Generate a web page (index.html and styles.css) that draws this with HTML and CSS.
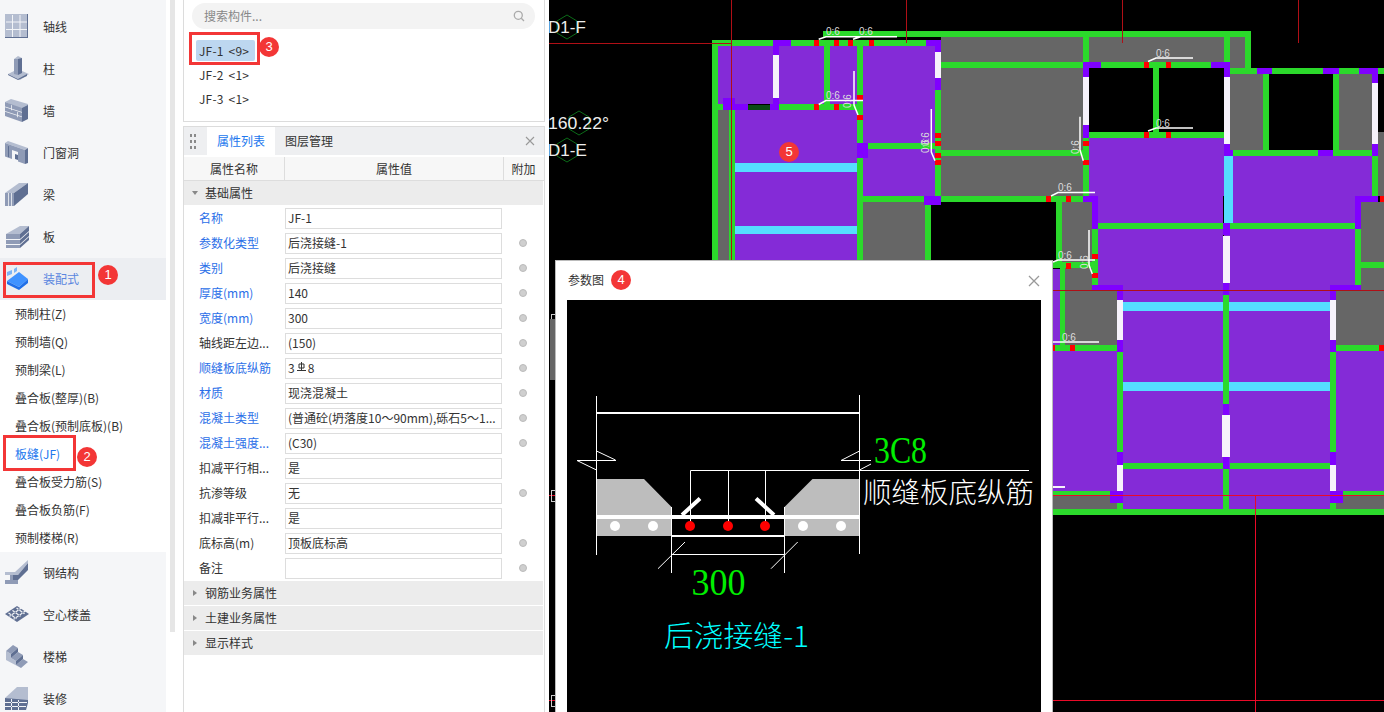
FILE: index.html
```html
<!DOCTYPE html>
<html lang="zh-CN">
<head>
<meta charset="utf-8">
<title>参数图</title>
<link rel="stylesheet" href="styles.css">
</head>
<body>
<div class="app">

<aside class="sidebar">
  <div class="nav">
    <div class="nav-row"><svg class="nav-icon" viewBox="0 0 24 24"><rect class="l" x="0" y="0" width="23" height="24"/><path class="d" d="M22 0h1v24H0v-1h22z"/><path class="w" d="M7 1h1v22H7zM14.500 1h1v22h-1zM1 7.500h21v1H1zM1 15h21v1H1z"/></svg><span>轴线</span></div>
    <div class="nav-row"><svg class="nav-icon" viewBox="0 0 24 24"><path class="l" d="M3 18l6-3v-12l4-3 4 2v13l7 3-9 6z"/><path class="d" d="M13 3l4-1v15l-4 2z"/><path class="m" d="M9 3l4 0v16l-4-1z"/><path class="d" d="M3 18l10 5 9-5 0 2-9 4-10-5z"/></svg><span>柱</span></div>
    <div class="nav-row"><svg class="nav-icon" viewBox="0 0 24 24"><path class="l" d="M0 4l6-3 17 5v4l-6 1z"/><path class="m" d="M0 4l17 6v14L0 18z"/><path class="d" d="M17 10l6-3v14l-6 3z"/><path class="w" d="M0 8.500l17 5.500v.8L0 9.300zM0 13l17 5.500v.8L0 13.800zM6 7l.8.300v5h-.8zM12 14l.8.300v5h-.8z"/></svg><span>墙</span></div>
    <div class="nav-row"><svg class="nav-icon" viewBox="0 0 24 24"><path class="l" d="M0 3l3-2 20 7-3 2z"/><path class="m" d="M0 3l20 7v14l-7-2.500V12L7 10v9l-7-2.500z"/><path class="d" d="M20 10l3-2v15l-3 1zM3 6l1 .300v11l-1-.300z"/><path class="d" d="M10 14l3 1v5l-3-1z"/></svg><span>门窗洞</span></div>
    <div class="nav-row"><svg class="nav-icon" viewBox="0 0 24 24"><path class="l" d="M0 11L14 1h9L9 11z"/><path class="d" d="M9 11L23 1v11L9 24z"/><path class="m" d="M0 11h9v13H0z"/><path class="w" d="M3 11h.8v13H3zM6 11h.8v13H6z"/></svg><span>梁</span></div>
    <div class="nav-row"><svg class="nav-icon" viewBox="0 0 24 24"><path class="l" d="M1 10L15 2h9l-9 8z"/><path class="m" d="M1 10h14v14H1z"/><path class="d" d="M15 10l9-8v14l-9 8z"/><path class="w" d="M1 15h14v1H1zM1 20h14v1H1zM15 15l9-8v1l-9 8zM15 20l9-8v1l-9 8z"/></svg><span>板</span></div>
    <div class="nav-row nav-row-active"><svg class="nav-icon" viewBox="0 0 24 24"><path class="bl" d="M2 6l5-2v4L2 10zM9 3l3-2v4L9 7z"/><path class="bb" d="M2 15l12-9 9 7-9 8z"/><path class="bd" d="M2 15l12 6v3L2 18zM14 21l9-8v4l-9 7z"/></svg><span>装配式</span></div>
  </div>
  <ul class="sub">
    <li>预制柱(Z)</li>
    <li>预制墙(Q)</li>
    <li>预制梁(L)</li>
    <li>叠合板(整厚)(B)</li>
    <li>叠合板(预制底板)(B)</li>
    <li class="sub-on">板缝(JF)</li>
    <li>叠合板受力筋(S)</li>
    <li>叠合板负筋(F)</li>
    <li>预制楼梯(R)</li>
  </ul>
  <div class="nav">
    <div class="nav-row"><svg class="nav-icon" viewBox="0 0 24 24"><path class="l" d="M0 12H10L23 0V3L13 15H0z"/><path class="d" d="M8 15H13L23 3V10L13 20H8z"/><path class="m" d="M5 15h3v5H5z"/><path class="m" d="M0 20h13v4H0z"/></svg><span>钢结构</span></div>
    <div class="nav-row"><svg class="nav-icon" viewBox="0 0 24 24"><path class="d" d="M0 12L12 4l12 8-12 8z"/><path class="w" d="M4 10.500l8 6-1 .7-8-6zM8 8l8 6-1 .7-8-6zM12 5.500l8 6-1 .7-8-6zM16 5.500L4 14l1 .7 12-8.500zM20 8.500L8 17l1 .7 12-8.500z"/></svg><span>空心楼盖</span></div>
    <div class="nav-row"><svg class="nav-icon" viewBox="0 0 24 24"><path class="l" d="M1 7L6 10V14L11 17V21L16 24L1 16z"/><path class="m" d="M1 7L8 1L13 4L6 10zM6 14L13 8L18 11L11 17zM11 21L18 15L23 18L16 24z"/><path class="d" d="M6 10L13 4V8L6 14zM11 17L18 11V15L11 21z"/></svg><span>楼梯</span></div>
    <div class="nav-row"><svg class="nav-icon" viewBox="0 0 24 24"><path class="l" d="M0 12L12 1h11v13H10z"/><path class="d" d="M0 12l23 2v3l-2 7H0z"/><path class="w" d="M0 16h22v1H0zM0 20h21v1H0zM6 13v11h1V13zM13 14v10h1V14z"/></svg><span>装修</span></div>
  </div>
</aside>

<div class="scrollbar"><div class="scroll-thumb"></div></div>

<main class="panels">
  <section class="list-panel">
    <div class="search">
      <span>搜索构件...</span>
      <svg class="search-icon" viewBox="0 0 12 12"><circle cx="5.300" cy="5.300" r="4"/><path d="M8.300 8.300L11 11"/></svg>
    </div>
    <ul class="items">
      <li class="item item-on">JF-1 &lt;9&gt;</li>
      <li class="item">JF-2 &lt;1&gt;</li>
      <li class="item">JF-3 &lt;1&gt;</li>
    </ul>
  </section>

  <section class="prop-panel">
    <div class="tabs">
      <div class="grip"><i></i><i></i><i></i><i></i><i></i><i></i></div>
      <div class="tab tab-on">属性列表</div>
      <div class="tab">图层管理</div>
      <svg class="tab-close" viewBox="0 0 10 10"><path d="M1 1l8 8M9 1l-8 8"/></svg>
    </div>
    <div class="thead">
      <div>属性名称</div><div>属性值</div><div>附加</div>
    </div>
    <div class="group"><i class="tri tri-down"></i>基础属性</div>
    <div class="rows">
      <div class="row"><label class="key">名称</label><div class="val">JF-1</div></div>
      <div class="row"><label class="key">参数化类型</label><div class="val">后浇接缝-1</div><b class="dot"></b></div>
      <div class="row"><label class="key">类别</label><div class="val">后浇接缝</div><b class="dot"></b></div>
      <div class="row"><label class="key">厚度(mm)</label><div class="val">140</div><b class="dot"></b></div>
      <div class="row"><label class="key">宽度(mm)</label><div class="val">300</div><b class="dot"></b></div>
      <div class="row"><label>轴线距左边...</label><div class="val">(150)</div><b class="dot"></b></div>
      <div class="row"><label class="key">顺缝板底纵筋</label><div class="val">3<svg class="rebar" viewBox="0 0 11 11"><path d="M3 2h5v4H3zM5.500 0v8M1 8.500h9"/></svg>8</div><b class="dot"></b></div>
      <div class="row"><label class="key">材质</label><div class="val">现浇混凝土</div><b class="dot"></b></div>
      <div class="row"><label class="key">混凝土类型</label><div class="val">(普通砼(坍落度10～90mm),砾石5～1...</div><b class="dot"></b></div>
      <div class="row"><label class="key">混凝土强度...</label><div class="val">(C30)</div><b class="dot"></b></div>
      <div class="row"><label>扣减平行相...</label><div class="val">是</div></div>
      <div class="row"><label>抗渗等级</label><div class="val">无</div><b class="dot"></b></div>
      <div class="row"><label>扣减非平行...</label><div class="val">是</div></div>
      <div class="row"><label>底标高(m)</label><div class="val">顶板底标高</div><b class="dot"></b></div>
      <div class="row"><label>备注</label><div class="val"></div><b class="dot"></b></div>
    </div>
    <div class="group"><i class="tri"></i>钢筋业务属性</div>
    <div class="group"><i class="tri"></i>土建业务属性</div>
    <div class="group"><i class="tri"></i>显示样式</div>
  </section>
</main>

<section class="canvas">
  <svg class="plan" viewBox="549 0 835 712" shape-rendering="crispEdges">
    <g class="gray">
      <rect x="718" y="110" width="12" height="152"/><rect x="863" y="202" width="62" height="60"/>
      <rect x="941" y="37" width="142" height="25"/><rect x="941" y="68" width="142" height="82"/><rect x="941" y="156" width="142" height="40"/>
      <rect x="1089" y="37" width="135" height="25"/><rect x="1230" y="37" width="15" height="31"/>
      <rect x="1230" y="74" width="33" height="76"/><rect x="1339" y="74" width="33" height="76"/><rect x="1378" y="132" width="6" height="64"/>
      <rect x="1062" y="202" width="30" height="60"/><rect x="1065" y="268" width="27" height="23"/><rect x="1065" y="291" width="52" height="54"/>
      <rect x="1336" y="291" width="48" height="54"/><rect x="1361" y="202" width="23" height="60"/><rect x="1361" y="268" width="23" height="23"/>
      <rect x="1053" y="496" width="64" height="13"/><rect x="1336" y="496" width="48" height="13"/>
      <rect x="550" y="319" width="5" height="61"/>
    </g>
    <g class="purple">
      <rect x="718" y="46" width="55" height="58"/><rect x="779" y="46" width="45" height="58"/><rect x="830" y="46" width="27" height="58"/><rect x="863" y="46" width="72" height="150"/>
      <rect x="735" y="110" width="122" height="152"/>
      <rect x="1089" y="138" width="135" height="58"/><rect x="1098" y="196" width="125" height="89"/><rect x="1230" y="156" width="142" height="40"/><rect x="1230" y="196" width="125" height="89"/><rect x="1224" y="223" width="9" height="62"/>
      <rect x="1053" y="269" width="7" height="76"/><rect x="1123" y="285" width="207" height="224"/><rect x="1053" y="351" width="64" height="140"/><rect x="1336" y="351" width="48" height="140"/>
    </g>
    <g class="cyan">
      <rect x="735" y="163" width="122" height="9"/><rect x="735" y="226" width="122" height="8"/><rect x="1224" y="156" width="9" height="67"/>
      <rect x="1123" y="302" width="207" height="9"/><rect x="1123" y="382" width="207" height="9"/>
    </g>
    <g class="green">
      <rect x="823" y="31" width="428" height="6"/><rect x="712" y="40" width="61" height="6"/><rect x="791" y="40" width="135" height="6"/>
      <rect x="941" y="62" width="142" height="6"/><rect x="1101" y="62" width="110" height="6"/>
      <rect x="718" y="104" width="5" height="6"/><rect x="779" y="104" width="78" height="6"/><rect x="868" y="143" width="67" height="6"/>
      <rect x="941" y="150" width="142" height="6"/><rect x="1089" y="132" width="138" height="6"/><rect x="863" y="196" width="62" height="6"/><rect x="941" y="196" width="142" height="6"/>
      <rect x="1230" y="68" width="154" height="6"/><rect x="1233" y="150" width="139" height="6"/><rect x="1098" y="223" width="125" height="6"/><rect x="1230" y="223" width="125" height="6"/>
      <rect x="1053" y="262" width="39" height="6"/><rect x="1361" y="262" width="23" height="6"/><rect x="1053" y="345" width="64" height="6"/><rect x="1336" y="345" width="48" height="6"/>
      <rect x="1120" y="463" width="103" height="6"/><rect x="1230" y="463" width="103" height="6"/><rect x="1053" y="491" width="57" height="5"/><rect x="1343" y="491" width="41" height="5"/><rect x="1053" y="509" width="331" height="6"/>
      <rect x="712" y="40" width="6" height="222"/><rect x="824" y="46" width="6" height="58"/><rect x="857" y="46" width="6" height="97"/><rect x="857" y="158" width="6" height="104"/><rect x="935" y="90" width="6" height="106"/>
      <rect x="925" y="205" width="6" height="57"/><rect x="729" y="110" width="6" height="152"/>
      <rect x="1083" y="37" width="6" height="25"/><rect x="1224" y="37" width="6" height="25"/><rect x="1245" y="31" width="6" height="37"/><rect x="1153" y="68" width="6" height="64"/><rect x="1083" y="138" width="6" height="58"/>
      <rect x="1263" y="74" width="6" height="76"/><rect x="1333" y="74" width="6" height="76"/><rect x="1372" y="156" width="6" height="40"/>
      <rect x="1056" y="202" width="6" height="60"/><rect x="1060" y="268" width="5" height="77"/><rect x="1092" y="229" width="6" height="56"/><rect x="1355" y="229" width="6" height="56"/>
      <rect x="1117" y="352" width="6" height="100"/><rect x="1330" y="352" width="6" height="100"/><rect x="1223" y="295" width="6" height="109"/><rect x="1223" y="469" width="6" height="40"/>
      <rect x="1117" y="503" width="6" height="6"/><rect x="1330" y="503" width="6" height="6"/>
    </g>
    <rect class="deep" x="748" y="105" width="22" height="5"/>
    <g class="col">
      <rect x="773" y="40" width="18" height="6"/><rect x="773" y="46" width="6" height="9"/><rect x="773" y="98" width="6" height="12"/><rect x="723" y="98" width="12" height="12"/><rect x="735" y="104" width="13" height="6"/><rect x="770" y="104" width="9" height="6"/>
      <rect x="926" y="40" width="15" height="6"/><rect x="935" y="46" width="6" height="6"/><rect x="935" y="78" width="6" height="12"/><rect x="857" y="143" width="11" height="15"/><rect x="924" y="196" width="17" height="9"/>
      <rect x="1083" y="62" width="18" height="6"/><rect x="1083" y="68" width="6" height="9"/><rect x="1083" y="125" width="6" height="13"/><rect x="1211" y="62" width="19" height="6"/><rect x="1224" y="68" width="6" height="9"/><rect x="1224" y="144" width="6" height="12"/><rect x="1224" y="150" width="9" height="6"/>
      <rect x="1257" y="68" width="15" height="6"/><rect x="1323" y="68" width="16" height="6"/><rect x="1359" y="68" width="19" height="6"/><rect x="1372" y="74" width="6" height="9"/><rect x="1372" y="144" width="6" height="12"/><rect x="1318" y="150" width="15" height="6"/>
      <rect x="1083" y="196" width="15" height="6"/><rect x="1092" y="202" width="6" height="27"/><rect x="1355" y="196" width="23" height="6"/><rect x="1355" y="202" width="6" height="27"/>
      <rect x="1223" y="223" width="7" height="12"/><rect x="1092" y="285" width="31" height="6"/><rect x="1117" y="291" width="6" height="9"/><rect x="1330" y="285" width="31" height="6"/><rect x="1330" y="291" width="6" height="9"/>
      <rect x="1117" y="340" width="6" height="12"/><rect x="1330" y="340" width="6" height="12"/><rect x="1223" y="283" width="6" height="12"/><rect x="1223" y="404" width="6" height="11"/><rect x="1223" y="457" width="6" height="12"/>
      <rect x="1117" y="452" width="6" height="13"/><rect x="1330" y="452" width="6" height="13"/><rect x="1110" y="491" width="13" height="12"/><rect x="1330" y="491" width="13" height="12"/>
    </g>
    <g class="white">
      <rect x="773" y="55" width="6" height="43"/><rect x="935" y="52" width="6" height="26"/><rect x="1083" y="77" width="6" height="48"/><rect x="1224" y="77" width="6" height="67"/><rect x="1372" y="83" width="6" height="61"/>
      <rect x="1223" y="236" width="7" height="47"/><rect x="1117" y="300" width="6" height="40"/><rect x="1330" y="300" width="6" height="40"/><rect x="1222" y="415" width="8" height="42"/><rect x="1117" y="465" width="6" height="26"/><rect x="1330" y="465" width="6" height="26"/>
      <rect x="1053" y="486" width="12" height="2"/>
    </g>
    <g class="red">
      <rect x="814" y="40" width="5" height="6"/><rect x="834" y="40" width="5" height="6"/><rect x="848" y="40" width="5" height="6"/><rect x="869" y="40" width="5" height="6"/><rect x="814" y="104" width="5" height="6"/><rect x="834" y="104" width="5" height="6"/>
      <rect x="857" y="95" width="6" height="5"/><rect x="857" y="115" width="6" height="5"/><rect x="935" y="133" width="6" height="5"/><rect x="935" y="141" width="6" height="5"/><rect x="935" y="153" width="6" height="5"/><rect x="935" y="160" width="6" height="5"/>
      <rect x="1144" y="62" width="5" height="6"/><rect x="1166" y="62" width="5" height="6"/><rect x="1144" y="132" width="5" height="6"/><rect x="1166" y="132" width="5" height="6"/><rect x="1083" y="141" width="6" height="5"/><rect x="1083" y="160" width="6" height="5"/>
      <rect x="1046" y="196" width="5" height="6"/><rect x="1066" y="196" width="5" height="6"/><rect x="1092" y="254" width="6" height="5"/><rect x="1092" y="273" width="6" height="5"/><rect x="1066" y="263" width="5" height="6"/>
      <rect x="1053" y="345" width="2" height="6"/><rect x="1070" y="345" width="5" height="6"/><rect x="1379" y="345" width="5" height="6"/><rect x="1380" y="196" width="4" height="6"/>
    </g>
    <path class="axis-dark" d="M549 43.500H731.500M731.500 0V262M906.500 0V43M1122.500 0V43M1298.500 0V43M1053 290.500H1384"/>
    <path class="axis" d="M1053 495.500H1384M1255.500 495V712M1053 700.500H1384M549 495.500H555M549 700.500H555"/>
    <path class="stub" d="M551 314.500H555M551 314.500V319M551 490.500H555V501H551zM551 695.500H555V706H551z"/>
    <g shape-rendering="auto">
      <path class="hex" d="M567 15l10 6v12l-10 6-10-6V21zM579 111l10 6v12l-10 6-10-6v-12zM567 138l10 6v12l-10 6-10-6v-12z"/>
      <path class="leader" d="M818.700 39.300L826 36.700H863M853 39.300L860.700 36.700H897M818.700 104.500L826 100.500H863M854 71V105L858 115M931.300 109V152L935 160.700M1148 61.500L1156 58H1193M1148 131L1156 128H1193M1051 196L1058 192.500H1095M1080 116.700V150L1083.300 160.700M1053 262L1058 260H1095M1089 230V265L1092.300 274M1053 342H1099"/>
      <text class="axis-name" x="548" y="33">D1-F</text>
      <text class="axis-name" x="548" y="129" textLength="61" lengthAdjust="spacingAndGlyphs">160.22°</text>
      <text class="axis-name" x="548" y="156">D1-E</text>
      <text class="note" x="826" y="35">0:6</text><text class="note" x="859" y="35">0:6</text><text class="note" x="826" y="99">0:6</text>
      <text class="note" x="1156" y="57">0:6</text><text class="note" x="1156" y="127">0:6</text><text class="note" x="1058" y="191">0:6</text><text class="note" x="1058" y="259">0:6</text><text class="note" x="1062" y="341">0:6</text>
      <text class="note" transform="translate(851 108) rotate(-90)">0:6</text><text class="note" transform="translate(929 146) rotate(-90)">0:6</text><text class="note" transform="translate(929 153) rotate(-90)">0:6</text>
      <text class="note" transform="translate(1079 154) rotate(-90)">0:6</text><text class="note" transform="translate(1088 269) rotate(-90)">0:6</text>
    </g>
  </svg>

  <div class="dialog">
    <header class="dialog-head">
      <span>参数图</span>
      <svg class="dialog-close" viewBox="0 0 12 12"><path d="M1 1l10 10M11 1L1 11"/></svg>
    </header>
    <svg class="drawing" viewBox="567 300 474 412">
      <path class="solid" d="M597 479H644L671.500 507V515H597zM597 519H671.500V536H597zM784.500 515V507L812.500 479H859V515zM784.500 519H859V536H784.500z"/>
      <path class="thick" d="M597 517H859"/>
      <path class="thick" d="M682 515L700 498.500M756 498.500L774 515"/>
      <path class="mid" d="M597 413H859M671.500 536H784.500"/>
      <path class="thin" d="M596.500 396V555M859.500 395V554M577 460.500H616M596.500 451L615.500 460M577 460.500L596.500 470M841 460.500L859.500 451M841 460.500H871M859.500 470L871 464M690.500 526V470.500H1029M728.500 470.500V526M765.500 470.500V526M671.500 507V573M784.500 507V573M671.500 554.500H784.500M658 568.700L685 542M771 568.700L797.700 542"/>
      <g class="hole"><circle cx="615" cy="526" r="5"/><circle cx="653" cy="526" r="5"/><circle cx="803" cy="526" r="5"/><circle cx="841" cy="526" r="5"/></g>
      <g class="bar"><circle cx="690" cy="526" r="5"/><circle cx="728" cy="526" r="5"/><circle cx="765" cy="526" r="5"/></g>
      <text class="dim" x="874" y="463" textLength="53" lengthAdjust="spacingAndGlyphs">3C8</text>
      <text class="dim" x="691.500" y="595" textLength="54" lengthAdjust="spacingAndGlyphs">300</text>
      <text class="caption" x="863" y="503" textLength="171" lengthAdjust="spacingAndGlyphs">顺缝板底纵筋</text>
      <text class="title" x="664" y="647" textLength="145" lengthAdjust="spacingAndGlyphs">后浇接缝-1</text>
    </svg>
  </div>
</section>

<div class="mark mark-1"></div>
<div class="mark mark-2"></div>
<div class="mark mark-3"></div>
<span class="badge badge-1">1</span>
<span class="badge badge-2">2</span>
<span class="badge badge-3">3</span>
<span class="badge badge-4">4</span>
<span class="badge badge-5">5</span>

</div>
</body>
</html>
```

FILE: styles.css
```css
* { box-sizing: border-box; }
html, body { margin: 0; padding: 0; height: 100%; overflow: hidden; background: #fff; }
body { font: 12px/1.4 "Noto Sans CJK SC", "Noto Sans", sans-serif; color: #333; }
ul { list-style: none; margin: 0; padding: 0; }

.app { position: relative; display: flex; width: 1384px; height: 712px; overflow: hidden; }

/* sidebar */
.sidebar { flex: none; width: 166px; height: 712px; background: #f5f6f8; padding-top: 6px; overflow: hidden; }
.nav-row { display: flex; align-items: center; height: 42px; padding-left: 5px; gap: 14px; color: #333; }
.nav-row-active { background: #eceef2; color: #5a86e0; }
.nav-icon { flex: none; width: 24px; height: 24px; margin-top: -2px; }
.l { fill: #b4bdd0; }
.m { fill: #8f9bb6; }
.d { fill: #5f6f92; }
.w { fill: #f2f4f7; }
.bl { fill: #7db4f5; }
.bb { fill: #3f92ff; }
.bd { fill: #1f6fe8; }
.sub { background: #fff; }
.sub li { height: 28px; line-height: 28px; padding-left: 15px; color: #333; }
.sub .sub-on { color: #2277ee; }

.scrollbar { flex: none; width: 17px; height: 712px; padding-left: 4px; background: #fff; }
.scroll-thumb { width: 5px; height: 632px; background: #e6e6e6; }

/* middle panels */
.panels { flex: none; width: 366px; height: 712px; display: flex; flex-direction: column; gap: 4px; padding-right: 4px; }
.list-panel { height: 122px; border: 1px solid #dcdcdc; border-top: 0; padding: 3px 9px 0 8px; }
.search { display: flex; align-items: center; justify-content: space-between; height: 26px; padding: 0 10px 0 12px; background: #f3f3f3; border-radius: 13px; color: #888; }
.search-icon { width: 12px; height: 12px; fill: none; stroke: #aaa; stroke-width: 1.300; }
.items { margin-top: 11px; padding-left: 4px; }
.item { display: block; width: 59px; height: 21px; margin-bottom: 3px; line-height: 21px; padding-left: 3px; border-radius: 2px; white-space: pre; word-spacing: 2px; letter-spacing: .2px; color: #333; }
.item-on { background: #bdd7f0; }

.prop-panel { flex: 1; border: 1px solid #dcdcdc; border-bottom: 0; min-height: 0; }
.tabs { position: relative; display: flex; height: 28px; background: #eeeff1; margin-bottom: 2px; }
.grip { display: grid; grid-template-columns: 2px 2px; gap: 3px 2px; align-content: center; width: 23px; padding-left: 6px; }
.grip i { width: 2px; height: 3px; background: #8a8a8a; }
.tab { height: 28px; line-height: 28px; padding: 0 10px; }
.tab-on { background: #fff; color: #2277ee; }
.tab-close { position: absolute; right: 9px; top: 9px; width: 10px; height: 10px; fill: none; stroke: #999; stroke-width: 1.100; }

.thead { display: grid; grid-template-columns: 100px 219px 40px; height: 24px; line-height: 23px; text-align: center; background: #f7f7f7; border-bottom: 1px solid #ddd; }
.thead div + div { border-left: 1px solid #ddd; }

.group { width: 359px; height: 24px; line-height: 24px; margin-bottom: 1px; background: #ececec; padding-left: 21px; position: relative; }
.tri { position: absolute; left: 9px; top: 9px; width: 0; height: 0; border: 3px solid transparent; border-left: 4px solid #888; border-right: 0; }
.tri-down { left: 8px; top: 10px; border: 3px solid transparent; border-top: 4px solid #888; border-bottom: 0; }

.rows { padding-bottom: 0; }
.row { position: relative; display: flex; height: 25px; align-items: flex-start; padding-top: 2px; }
.row label { flex: none; width: 101px; height: 21px; line-height: 20px; padding-left: 15px; white-space: nowrap; color: #333; }
.row .key { color: #2b6fe8; }
.val { flex: none; width: 217px; height: 21px; line-height: 18px; padding: 0 2px; border: 1px solid #ddd; background: #fff; white-space: nowrap; overflow: hidden; }
.rebar { width: 11px; height: 11px; margin: 0 1px -1px; vertical-align: 1px; fill: none; stroke: #333; stroke-width: 1; }
.dot { position: absolute; left: 335px; top: 8px; width: 8px; height: 8px; border-radius: 50%; background: #cfcfcf; border: 1px solid #bbb; }

/* CAD canvas */
.canvas { position: relative; flex: none; width: 835px; height: 712px; background: #000; overflow: hidden; }
.plan { display: block; width: 835px; height: 712px; }
.gray rect { fill: #666; }
.purple rect { fill: #842bd7; }
.cyan rect { fill: #55ddff; }
.green rect { fill: #2bd92b; }
.col rect { fill: #8000ff; }
.white rect { fill: #f6f2fb; }
.red rect { fill: #f00; }
.deep { fill: #0a4a14; }
.axis-dark { fill: none; stroke: #b00f16; stroke-width: 1; }
.axis { fill: none; stroke: #ea0a28; stroke-width: 1; }
.stub { fill: none; stroke: #ccc; stroke-width: 1; }
.hex { fill: none; stroke: #0b6b18; stroke-width: 1; }
.leader { fill: none; stroke: #fff; stroke-width: 1.500; }
.axis-name { font: 17px "Liberation Sans", sans-serif; fill: #eee; }
.note { font: 10px "Liberation Sans", sans-serif; fill: #ddd; }

/* parameter dialog */
.dialog { position: absolute; left: 6px; top: 260px; width: 498px; height: 452px; background: #fff; border: 1px solid #bbb; border-bottom: 0; padding: 0 11px 0 11px; }
.dialog-head { display: flex; align-items: center; justify-content: space-between; height: 39px; padding-left: 1px; color: #333; }
.dialog-close { width: 12px; height: 12px; margin-right: 1px; fill: none; stroke: #999; stroke-width: 1.300; }
.drawing { display: block; width: 474px; height: 412px; background: #000; }
.solid { fill: #bdbdbd; }
.thick { fill: none; stroke: #fff; stroke-width: 4; }
.mid { fill: none; stroke: #fff; stroke-width: 2; }
.thin { fill: none; stroke: #fff; stroke-width: 1; }
.hole circle { fill: #fff; }
.bar circle { fill: #f00; }
.dim { font: 38px "Liberation Serif", serif; fill: #0e0; }
.caption { font: 28px "Noto Sans CJK SC", sans-serif; font-weight: 300; fill: #fff; }
.title { font: 29px "Noto Sans CJK SC", sans-serif; font-weight: 300; fill: #0ff; }

/* annotations */
.mark { position: absolute; border: 3px solid #f33636; pointer-events: none; }
.mark-1 { left: 3px; top: 262px; width: 92px; height: 36px; }
.mark-2 { left: 3px; top: 435px; width: 73px; height: 36px; }
.mark-3 { left: 189px; top: 32px; width: 71px; height: 33px; }
.badge { position: absolute; width: 20px; height: 20px; border-radius: 50%; background: #f33636; color: #fff; text-align: center; line-height: 20px; font: 13px/20px "Liberation Sans", sans-serif; }
.badge-1 { left: 98px; top: 265px; }
.badge-2 { left: 77px; top: 447px; }
.badge-3 { left: 259px; top: 37px; }
.badge-4 { left: 611px; top: 270px; }
.badge-5 { left: 779px; top: 142px; }
```
